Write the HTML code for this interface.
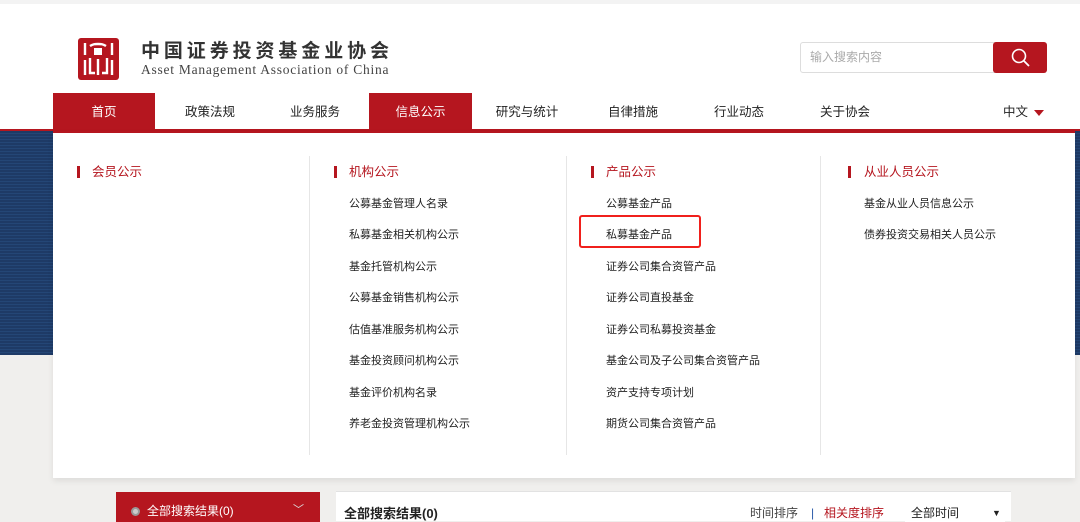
<!DOCTYPE html>
<html><head><meta charset="utf-8"><style>
*{margin:0;padding:0;box-sizing:border-box}
body{width:1080px;height:518px;overflow:hidden;background:#f0efed;font-family:"Liberation Sans","Noto Sans CJK SC",sans-serif;position:relative}
.a{position:absolute;white-space:nowrap;line-height:1}
.top{left:0;top:0;width:1080px;height:131px;background:#fff}
.blue{left:0;top:131px;width:1080px;height:224px;background:repeating-linear-gradient(0deg,#1e3a66 0 2px,#244676 2px 3px),#22406e}
.nav{top:93px;height:38px;line-height:38px;font-size:12.5px;color:#222;text-align:center;width:104px}
.panel{left:53px;top:131px;width:1022px;height:347px;background:#fff;box-shadow:0 3px 6px rgba(0,0,0,.08);border-top:2px solid #b5161f}
.h{font-size:12.5px;color:#b5161f}
.bar{width:3px;height:12px;background:#b5161f}
.it{font-size:11px;color:#222}
.div{width:1px;height:299px;top:156px;background:#e6e6e6}
</style></head><body>
<div class="a top"></div>
<div class="a" style="left:0;top:0;width:1080px;height:4px;background:#f3f3f3"></div>
<svg class="a" style="left:78px;top:38px" width="41" height="42" viewBox="0 0 41 42">
<rect width="41" height="42" rx="3" fill="#b5161f"/>
<g fill="none" stroke="#fff" stroke-width="2.4">
<path d="M7 5v12M34 5v12M12 8c3-2 5-2 8-2s5 0 8 2"/>
<rect x="16" y="10" width="8" height="7" fill="#fff" stroke="none"/>
<path d="M7 22v15M12 20v15h5M20 21v16M29 20v15h-5M34 22v15"/>
</g></svg>
<div class="a" style="left:141px;top:42px;font-size:19px;font-weight:bold;letter-spacing:3.9px;color:#333">中国证券投资基金业协会</div>
<div class="a" style="left:141px;top:63px;font-family:'Liberation Serif',serif;font-size:13.5px;letter-spacing:0.75px;color:#444">Asset Management Association of China</div>
<div class="a" style="left:800px;top:42px;width:198px;height:31px;border:1px solid #ddd;border-radius:3px;background:#fff;font-size:12px;color:#aaa;line-height:29px;padding-left:9px">输入搜索内容</div>
<div class="a" style="left:993px;top:42px;width:54px;height:31px;background:#b5161f;border-radius:3px"></div>
<svg class="a" style="left:1010px;top:47px" width="22" height="22"><circle cx="9" cy="9" r="6.5" fill="none" stroke="#fff" stroke-width="1.6"/><path d="M14 14l5 5" stroke="#fff" stroke-width="1.8"/></svg>
<div class="a nav" style="left:53px;width:102px;background:#b5161f;color:#fff">首页</div>
<div class="a nav" style="left:158px">政策法规</div>
<div class="a nav" style="left:263px">业务服务</div>
<div class="a nav" style="left:369px;width:103px;background:#b5161f;color:#fff">信息公示</div>
<div class="a nav" style="left:475px">研究与统计</div>
<div class="a nav" style="left:581px">自律措施</div>
<div class="a nav" style="left:687px">行业动态</div>
<div class="a nav" style="left:793px">关于协会</div>
<div class="a nav" style="left:985px;width:60px;text-align:left;padding-left:18px">中文</div>
<div class="a" style="left:1034px;top:110px;border:5px solid transparent;border-top:6px solid #b5161f"></div>
<div class="a blue"></div>
<div class="a" style="left:0;top:129px;width:1080px;height:2px;background:#b5161f"></div>
<div class="a panel"></div>
<div class="a div" style="left:309px"></div><div class="a div" style="left:566px"></div><div class="a div" style="left:820px"></div>
<div class="a bar" style="left:77px;top:166px"></div><div class="a h" style="left:92px;top:166px">会员公示</div>
<div class="a bar" style="left:334px;top:166px"></div><div class="a h" style="left:349px;top:166px">机构公示</div>
<div class="a bar" style="left:591px;top:166px"></div><div class="a h" style="left:606px;top:166px">产品公示</div>
<div class="a bar" style="left:848px;top:166px"></div><div class="a h" style="left:864px;top:166px">从业人员公示</div>
<div class="a it" style="left:349px;top:199px">公募基金管理人名录</div>
<div class="a it" style="left:349px;top:230px">私募基金相关机构公示</div>
<div class="a it" style="left:349px;top:262px">基金托管机构公示</div>
<div class="a it" style="left:349px;top:293px">公募基金销售机构公示</div>
<div class="a it" style="left:349px;top:325px">估值基准服务机构公示</div>
<div class="a it" style="left:349px;top:356px">基金投资顾问机构公示</div>
<div class="a it" style="left:349px;top:388px">基金评价机构名录</div>
<div class="a it" style="left:349px;top:419px">养老金投资管理机构公示</div>
<div class="a it" style="left:606px;top:199px">公募基金产品</div>
<div class="a it" style="left:606px;top:230px">私募基金产品</div>
<div class="a it" style="left:606px;top:262px">证券公司集合资管产品</div>
<div class="a it" style="left:606px;top:293px">证券公司直投基金</div>
<div class="a it" style="left:606px;top:325px">证券公司私募投资基金</div>
<div class="a it" style="left:606px;top:356px">基金公司及子公司集合资管产品</div>
<div class="a it" style="left:606px;top:388px">资产支持专项计划</div>
<div class="a it" style="left:606px;top:419px">期货公司集合资管产品</div>
<div class="a it" style="left:864px;top:199px">基金从业人员信息公示</div>
<div class="a it" style="left:864px;top:230px">债券投资交易相关人员公示</div>
<div class="a" style="left:579px;top:215px;width:122px;height:33px;border:2px solid #f0201c;border-radius:3px"></div>
<div class="a" style="left:116px;top:492px;width:204px;height:30px;background:#b5161f"></div>
<div class="a" style="left:131px;top:507px;width:9px;height:9px;border-radius:50%;background:#ccc;border:2px solid #999"></div>
<div class="a" style="left:147px;top:505px;font-size:12px;color:#fff">全部搜索结果(0)</div>
<div class="a" style="left:293px;top:505px;font-size:11px;color:#ddd">﹀</div>
<div class="a" style="left:336px;top:491px;width:675px;height:30px;background:#fff;border-top:1px solid #e2e2e2"></div>
<div class="a" style="left:344px;top:507px;font-size:13px;font-weight:bold;color:#222">全部搜索结果(0)</div>
<div class="a" style="left:750px;top:507px;font-size:12px;color:#444">时间排序</div>
<div class="a" style="left:811px;top:507px;font-size:12px;color:#2a5aa8">|</div>
<div class="a" style="left:824px;top:507px;font-size:12px;color:#b5161f">相关度排序</div>
<div class="a" style="left:905px;top:504px;width:100px;height:18px;background:#fff;font-size:12px;color:#222;padding-left:6px;line-height:18px">全部时间<span style="position:absolute;left:87px;font-size:9px">▼</span></div>
</body></html>
